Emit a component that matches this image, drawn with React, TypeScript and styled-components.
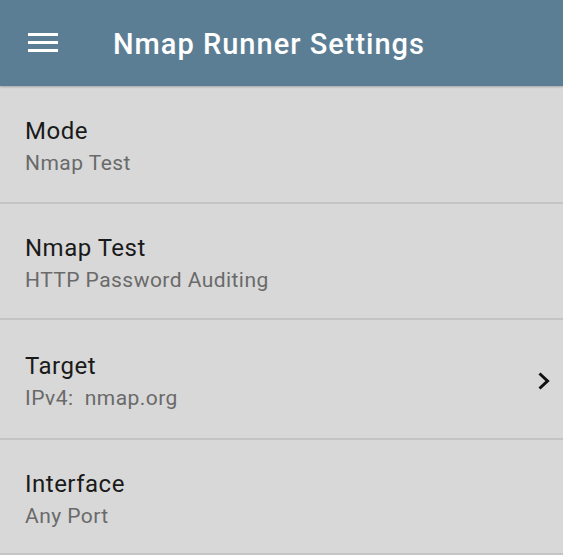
import { FC } from 'react';
import styled, { createGlobalStyle } from 'styled-components';

const GlobalStyle = createGlobalStyle`
  html, body {
    margin: 0;
    padding: 0;
    background: #d8d8d8;
    font-family: Roboto, "Noto Sans", sans-serif;
  }
  * {
    box-sizing: border-box;
  }
`;

interface SettingRowProps {
  title: string;
  value: string;
  height: number;
  chevron?: boolean;
}

const SettingRow: FC<SettingRowProps> = ({ title, value, height, chevron = false }) => {
  return (
    <Row $height={height}>
      <Texts>
        <RowTitle>{title}</RowTitle>
        <RowValue>{value}</RowValue>
      </Texts>
      {chevron && (
        <Chevron viewBox="0 0 12 18">
          <polyline points="1.5,1.5 9.5,9 1.5,16.5" fill="none" stroke="#111" strokeWidth="3" strokeLinejoin="miter" />
        </Chevron>
      )}
    </Row>
  );
};

const App: FC = () => {
  return (
    <>
      <GlobalStyle />
      <Page>
        <Header>
          <MenuButton aria-label="menu">
            <span />
            <span />
            <span />
          </MenuButton>
          <HeaderTitle>Nmap Runner Settings</HeaderTitle>
        </Header>
        <List>
          <SettingRow title="Mode" value="Nmap Test" height={118} />
          <SettingRow title="Nmap Test" value="HTTP Password Auditing" height={116} />
          <SettingRow title="Target" value="IPv4:  nmap.org" height={120} chevron />
          <SettingRow title="Interface" value="Any Port" height={115} />
        </List>
      </Page>
    </>
  );
};

export default App;

const Page = styled.div`
  width: 563px;
  height: 555px;
  background: #d8d8d8;
  overflow: hidden;
`;

const Header = styled.header`
  height: 86px;
  background: #5b7e94;
  display: flex;
  align-items: center;
  box-shadow: 0 1px 2px rgba(0, 0, 0, 0.25);
  position: relative;
  z-index: 1;
`;

const MenuButton = styled.div`
  width: 30px;
  margin-left: 28px;
  display: flex;
  flex-direction: column;
  gap: 5px;
  margin-top: -2px;

  span {
    display: block;
    height: 3px;
    background: #ffffff;
  }
`;

const HeaderTitle = styled.h1`
  margin: 2px 0 0 55px;
  font-size: 29px;
  font-weight: 500;
  color: #ffffff;
  letter-spacing: 1px;
`;

const List = styled.div`
  display: flex;
  flex-direction: column;
`;

const Row = styled.div<{ $height: number }>`
  height: ${(p) => p.$height}px;
  border-bottom: 2px solid #c4c4c4;
  display: flex;
  align-items: center;
  justify-content: space-between;
  padding: 4px 13px 0 25px;
`;

const Texts = styled.div`
  display: flex;
  flex-direction: column;
  gap: 4px;
`;

const RowTitle = styled.div`
  font-size: 24px;
  color: #1a1a1a;
  line-height: 30px;
  letter-spacing: 0.5px;
`;

const RowValue = styled.div`
  font-size: 21px;
  color: #6a6a6a;
  line-height: 26px;
  letter-spacing: 0.45px;
  white-space: pre;
`;

const Chevron = styled.svg`
  width: 12px;
  height: 18px;
`;
